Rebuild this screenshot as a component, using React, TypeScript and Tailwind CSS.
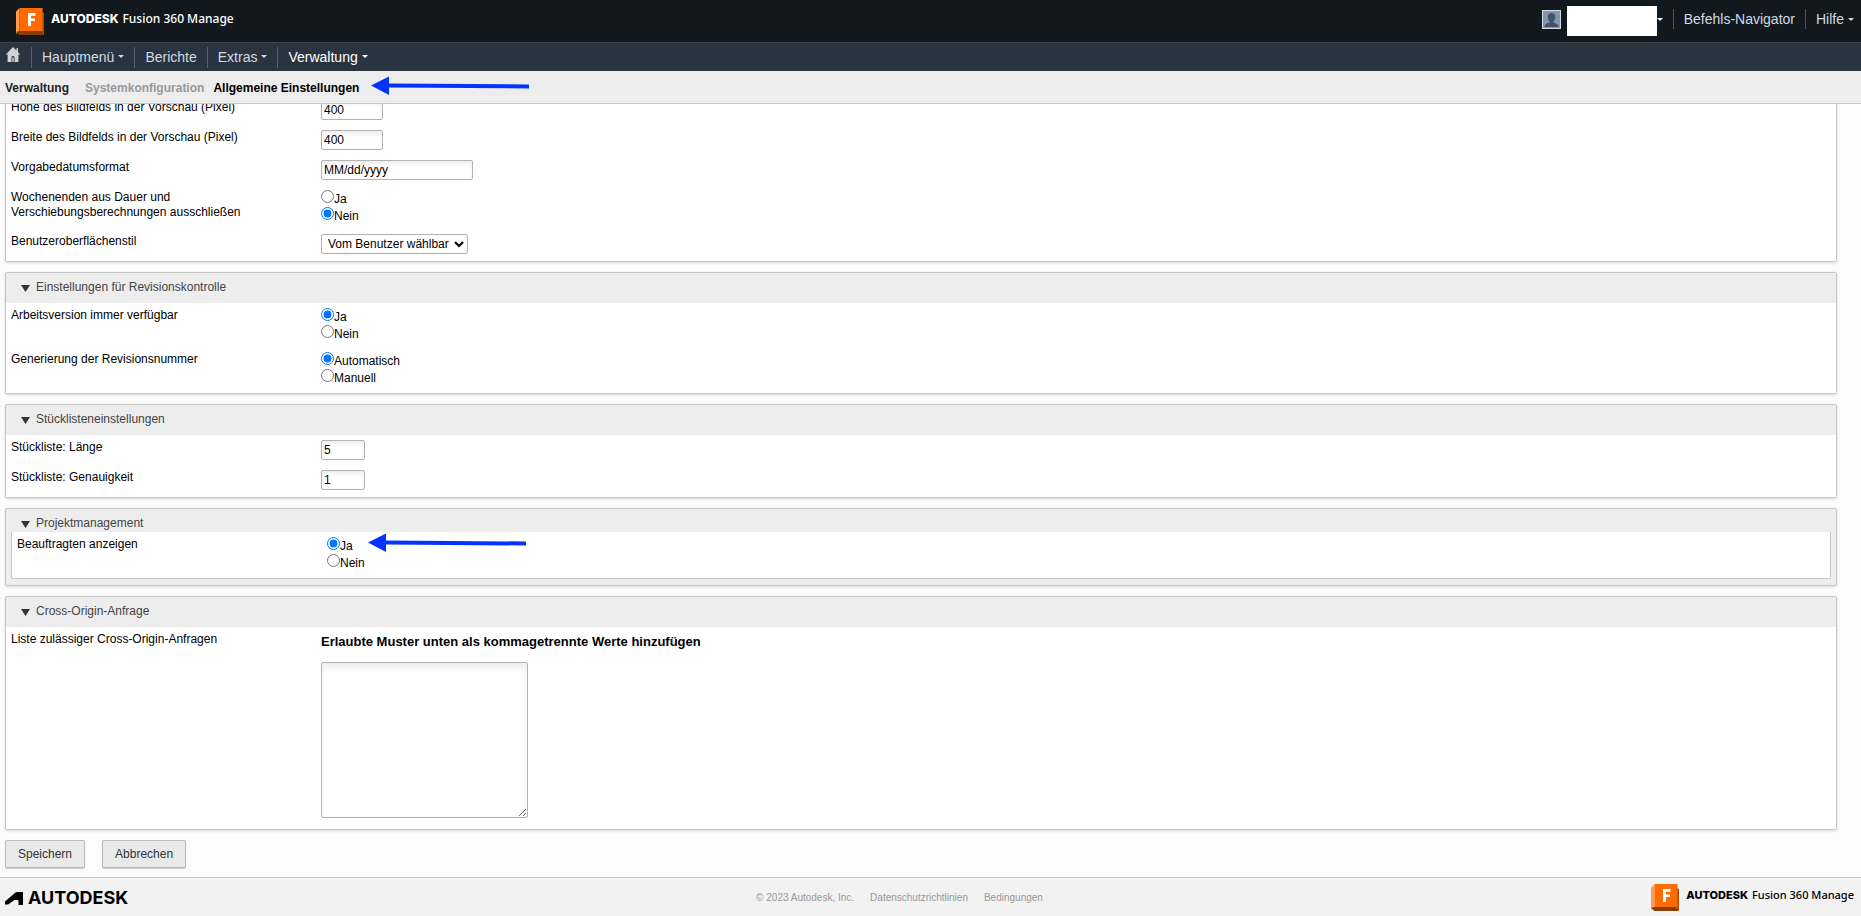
import React from 'react';

interface RadioOption {
  label: string;
  checked?: boolean;
}

function Caret({ className = '' }: { className?: string }) {
  return (
    <svg width="6" height="3" viewBox="0 0 6 3" className={`shrink-0 fill-current ${className}`}>
      <path d="M0 0h6L3 3z" />
    </svg>
  );
}

function ProductLogo({ className }: { className: string }) {
  return (
    <div className={`flex items-center gap-[7px] ${className}`}>
      <svg width="28" height="27" viewBox="0 0 28 27">
        <path d="M0 3.5 3.5 0v23L0 26z" fill="#ff9a55" />
        <path d="M3 23h22l3 4H3.500L0 24z" fill="#8c3c04" />
        <path d="M26 4l2 1v22l-3-4z" fill="#b04a02" />
        <path d="M3.500 0H26.500v23H3.500z" fill="#ff6b00" />
        <path d="M12 5h7.500v2.700h-4.500v2.800h4v2.600h-4V18h-3z" fill="#fff" />
      </svg>
      <div className="flex gap-1 pb-1 leading-4 whitespace-nowrap">
        <b className="font-['Inter',sans-serif] font-extrabold">AUTODESK</b>
        <span className="font-['Noto_Sans',sans-serif] font-medium">Fusion 360 Manage</span>
      </div>
    </div>
  );
}

function Arrow({ className }: { className: string }) {
  return (
    <svg width="160" height="20" viewBox="0 0 160 20" className={`absolute ${className}`}>
      <path d="M1 9.500 19 .5v7L159 8.500v4L19 11.500V19z" fill="#0433ff" />
    </svg>
  );
}

function Field({ label, htmlFor, children }: { label: string; htmlFor?: string; children: React.ReactNode }) {
  return (
    <div className="flex items-start">
      <label htmlFor={htmlFor} className="w-[310px] shrink-0 pr-16 leading-[15px]">
        {label}
      </label>
      {children}
    </div>
  );
}

function TextField({ id, label, value, width }: { id: string; label: string; value: string; width: string }) {
  return (
    <Field label={label} htmlFor={id}>
      <input
        id={id}
        type="text"
        defaultValue={value}
        className={`h-5 rounded-xs border border-[#b3b3b3] bg-white px-0.5 text-xs shadow-[inset_0_3px_4px_#eee] ${width}`}
      />
    </Field>
  );
}

function RadioField({ name, label, options }: { name: string; label: string; options: RadioOption[] }) {
  return (
    <Field label={label}>
      <div role="radiogroup" aria-label={label}>
        {options.map((option) => (
          <label key={option.label} className="flex h-[17px] items-start">
            <input type="radio" name={name} defaultChecked={option.checked} className="size-[13px]" />
            <span className="pt-px leading-4">{option.label}</span>
          </label>
        ))}
      </div>
    </Field>
  );
}

function SectionTitle({ title, className }: { title: string; className: string }) {
  return (
    <h2 className={`bg-[#ededed] text-[#444] ${className}`}>
      <button type="button" className="flex items-center gap-1.5 pl-[15px] leading-4">
        <svg width="9" height="7" viewBox="0 0 9 7" className="mt-0.5 fill-[#333]">
          <path d="M0 0h9L4.500 7z" />
        </svg>
        {title}
      </button>
    </h2>
  );
}

const panel = 'rounded-xs border border-[#c6c6c6] shadow-[0_1px_3px_rgba(0,0,0,0.15)]';
const panelBody = 'flex flex-col gap-2.5 bg-white px-[5px] pt-[5px] pb-[7px]';

function Section({ title, children }: { title: string; children: React.ReactNode }) {
  return (
    <section className={panel}>
      <SectionTitle title={title} className="pt-[6px] pb-2" />
      <div className={panelBody}>{children}</div>
    </section>
  );
}

function Header() {
  return (
    <header>
      <div className="flex h-[42px] items-center justify-between bg-[#11191f] text-sm text-[#d0dae2]">
        <ProductLogo className="pl-4 text-xs text-white" />
        <div className="flex items-center pr-[7px] pb-1">
          <svg width="19" height="19" viewBox="0 0 19 19" className="mr-1.5">
            <path d="M0 0h19v19H0z" fill="#d5dade" />
            <path d="M1 1h17v17H1z" fill="#8396ad" />
            <path d="M9.500 3c2.500 0 3.800 1.700 3.800 4 0 2-.8 3.300-1.800 4.200v1.300c2 .8 4.500 1 5 4.500H2.500c.5-3.500 3-3.700 5-4.500v-1.300C6.500 10.300 5.700 9 5.700 7c0-2.300 1.300-4 3.800-4z" fill="#42556b" />
          </svg>
          <button type="button" aria-label="Benutzer" className="mt-1 flex items-center text-white">
            <span className="h-[30px] w-[90px] bg-white" />
            <Caret className="mb-1" />
          </button>
          <a href="#navigator" className="ml-2.5 border-l border-[#4c555c] pl-2.5 leading-5">
            Befehls-Navigator
          </a>
          <button type="button" className="ml-2.5 flex items-center gap-1 border-l border-[#4c555c] pl-2.5 leading-5">
            Hilfe <Caret />
          </button>
        </div>
      </div>
      <nav className="flex h-[29px] items-start border-t border-[#3c4245] bg-[#2a3440] pt-1 text-sm text-[#d0dae2]">
        <a href="#home" aria-label="Startseite" className="flex h-[21px] w-8 border-r border-[#5a6068] pl-[6px]">
          <svg width="14" height="15" viewBox="0 0 14 15" fill="#d0d3d6">
            <path d="M7 0l3.500 3.500V1H12v4l2 2.300-.6.600-1-.8V15H8.500v-4.500c0-2-3-2-3 0V15H1.600V7.100l-1 .8L0 7.300z" />
            <path d="M6.300 10.500h1.400V15H6.300z" />
          </svg>
        </a>
        <button type="button" className="flex h-[21px] items-center gap-1 border-r border-[#5a6068] px-2.5 pb-0.5">
          Hauptmenü <Caret />
        </button>
        <a href="#berichte" className="flex h-[21px] items-center border-r border-[#5a6068] px-2.5 pb-0.5">
          Berichte
        </a>
        <button type="button" className="flex h-[21px] items-center gap-1 border-r border-[#5a6068] px-2.5 pb-0.5">
          Extras <Caret />
        </button>
        <button type="button" className="flex h-[21px] items-center gap-1 px-2.5 pb-0.5 text-white">
          Verwaltung <Caret />
        </button>
      </nav>
      <div className="relative flex h-[33px] items-center border-b border-[#c8c8c8] bg-[#ededed] pt-0.5 pl-[5px] font-bold">
        <a href="#verwaltung" className="text-[#222]">Verwaltung</a>
        <span className="ml-4 text-[#999]">Systemkonfiguration</span>
        <span className="ml-[9px] text-black">Allgemeine Einstellungen</span>
        <Arrow className="top-[5px] left-[370px]" />
      </div>
    </header>
  );
}

function Footer() {
  return (
    <footer className="grid grow grid-cols-[1fr_auto_1fr] items-center border-t border-[#c8c8c8] bg-[#f2f2f2] pr-[7px] pl-[5px]">
      <div className="flex items-center gap-[5px] pt-0.5 text-black">
        <svg width="18" height="13" viewBox="0 0 18 13">
          <path d="M0 12.500V9.500L10.500.5Q11 0 12 0H17.500q.5 0 .5.500V13h-4.500V9.200q0-1.200-1-1.200H9.500L3 12.500z" />
        </svg>
        <span className="font-['Inter',sans-serif] text-[18px] leading-5 font-bold">AUTODESK</span>
      </div>
      <div className="mr-[60px] flex gap-4 pt-0.5 text-[10px] text-[#999]">
        <span>© 2023 Autodesk, Inc.</span>
        <a href="#datenschutz">Datenschutzrichtlinien</a>
        <a href="#bedingungen">Bedingungen</a>
      </div>
      <ProductLogo className="justify-self-end text-[11px] text-black" />
    </footer>
  );
}

export default function App() {
  return (
    <div className="flex min-h-screen flex-col bg-[#fcfcfc] font-['Liberation_Sans',Arial,sans-serif] text-xs text-black">
      <Header />
      <main className="overflow-hidden pr-6 pb-[9px] pl-[5px]">
        <form className="flex flex-col gap-2.5">
          {/* scrolled partly under the header */}
          <section className={`-mt-2.5 ${panel}`}>
            <div className={panelBody}>
              <TextField id="preview-height" label="Höhe des Bildfelds in der Vorschau (Pixel)" value="400" width="w-[62px]" />
              <TextField id="preview-width" label="Breite des Bildfelds in der Vorschau (Pixel)" value="400" width="w-[62px]" />
              <TextField id="date-format" label="Vorgabedatumsformat" value="MM/dd/yyyy" width="w-[152px]" />
              <RadioField
                name="weekends"
                label="Wochenenden aus Dauer und Verschiebungsberechnungen ausschließen"
                options={[{ label: 'Ja' }, { label: 'Nein', checked: true }]}
              />
              <Field label="Benutzeroberflächenstil" htmlFor="ui-style">
                <select id="ui-style" className="h-5 w-[147px] rounded-xs border border-[#b3b3b3] bg-white pl-0.5 text-xs">
                  <option>Vom Benutzer wählbar</option>
                </select>
              </Field>
            </div>
          </section>

          <Section title="Einstellungen für Revisionskontrolle">
            <RadioField
              name="working"
              label="Arbeitsversion immer verfügbar"
              options={[{ label: 'Ja', checked: true }, { label: 'Nein' }]}
            />
            <RadioField
              name="revision"
              label="Generierung der Revisionsnummer"
              options={[{ label: 'Automatisch', checked: true }, { label: 'Manuell' }]}
            />
          </Section>

          <Section title="Stücklisteneinstellungen">
            <TextField id="bom-length" label="Stückliste: Länge" value="5" width="w-[44px]" />
            <TextField id="bom-precision" label="Stückliste: Genauigkeit" value="1" width="w-[44px]" />
          </Section>

          <section className={`relative bg-[#ededed] px-[5px] pb-[6px] ${panel}`}>
            <SectionTitle title="Projektmanagement" className="-ml-[5px] pt-[6px] pb-px" />
            <div className={`rounded-b-xs border border-t-0 border-[#c6c6c6] ${panelBody}`}>
              <RadioField
                name="assignee"
                label="Beauftragten anzeigen"
                options={[{ label: 'Ja', checked: true }, { label: 'Nein' }]}
              />
            </div>
            <Arrow className="top-[24px] left-[361px]" />
          </section>

          <Section title="Cross-Origin-Anfrage">
            <Field label="Liste zulässiger Cross-Origin-Anfragen" htmlFor="origins">
              <div className="pb-1">
                <p className="mb-3 pt-0.5 text-[13px] leading-4 font-bold">
                  Erlaubte Muster unten als kommagetrennte Werte hinzufügen
                </p>
                <textarea
                  id="origins"
                  className="block h-[156px] w-[207px] rounded-xs border border-[#b3b3b3] bg-white shadow-[inset_0_5px_6px_#eee]"
                />
              </div>
            </Field>
          </Section>

          <div className="flex gap-[17px] text-[#333]">
            <button type="submit" className="h-7 rounded-xs border border-[#bbb] bg-[#e9e9e9] px-3 pb-px shadow-[0_1px_1px_#ccc]">
              Speichern
            </button>
            <button type="button" className="h-7 rounded-xs border border-[#bbb] bg-[#e9e9e9] px-3 pb-px shadow-[0_1px_1px_#ccc]">
              Abbrechen
            </button>
          </div>
        </form>
      </main>
      <Footer />
    </div>
  );
}
